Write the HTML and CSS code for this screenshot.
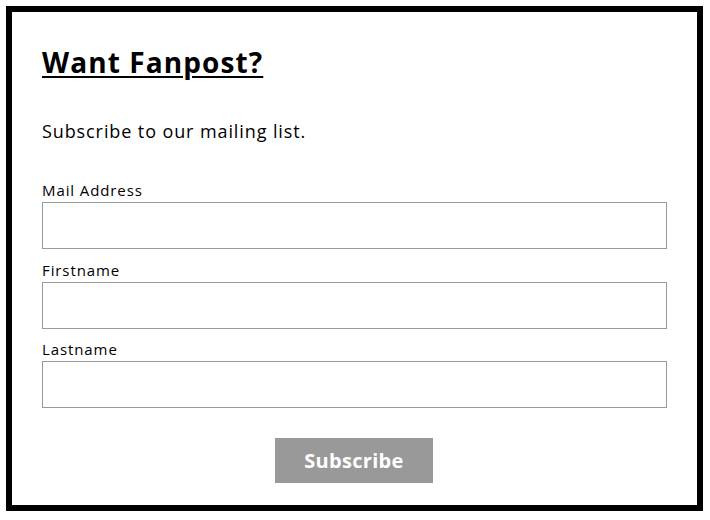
FILE: index.html
```html
<!DOCTYPE html>
<html>
<head>
<meta charset="utf-8">
<link rel="stylesheet" href="styles.css">
</head>
<body>
<div class="card">
  <h2 class="title">Want Fanpost?</h2>
  <p class="lead">Subscribe to our mailing list.</p>
  <form class="form">
    <label class="field">
      <span class="label">Mail Address</span>
      <input class="input" type="text">
    </label>
    <label class="field field-tight">
      <span class="label">Firstname</span>
      <input class="input" type="text">
    </label>
    <label class="field">
      <span class="label">Lastname</span>
      <input class="input" type="text">
    </label>
    <div class="actions">
      <button class="btn" type="button">Subscribe</button>
    </div>
  </form>
</div>
</body>
</html>
```
FILE: styles.css
```css
html, body {
  margin: 0;
  padding: 0;
  background: #fff;
}
body {
  padding: 6px 7px 9px 6px;
  font-family: "Open Sans", "Liberation Sans", sans-serif;
  color: #000;
}
.card {
  border: 6px solid #000;
  height: 505px;
  box-sizing: border-box;
  padding: 0 30px;
}
.title {
  margin: 30px 0 0;
  font-size: 28px;
  line-height: 40px;
  font-weight: 700;
  letter-spacing: 1.1px;
  text-decoration: underline;
  text-decoration-thickness: 2px;
  text-underline-offset: 3px;
}
.lead {
  margin: 37px 0 0;
  font-size: 18px;
  line-height: 24px;
  letter-spacing: 0.9px;
}
.form {
  display: flex;
  flex-direction: column;
  margin-top: 37px;
}
.field {
  display: flex;
  flex-direction: column;
  margin-bottom: 11px;
}
.field-tight {
  margin-bottom: 10px;
}
.label {
  font-size: 15px;
  line-height: 20px;
  margin-bottom: 2px;
  letter-spacing: 0.9px;
}
.input {
  height: 47px;
  box-sizing: border-box;
  border: 1px solid #999;
  margin: 0;
  padding: 0 8px;
  font: inherit;
}
.actions {
  display: flex;
  justify-content: center;
  margin-top: 19px;
}
.btn {
  width: 158px;
  height: 45px;
  border: 0;
  background: #999;
  color: #fff;
  font-family: inherit;
  font-size: 20px;
  font-weight: 700;
  letter-spacing: 0.3px;
  margin-right: 1px;
}
```
